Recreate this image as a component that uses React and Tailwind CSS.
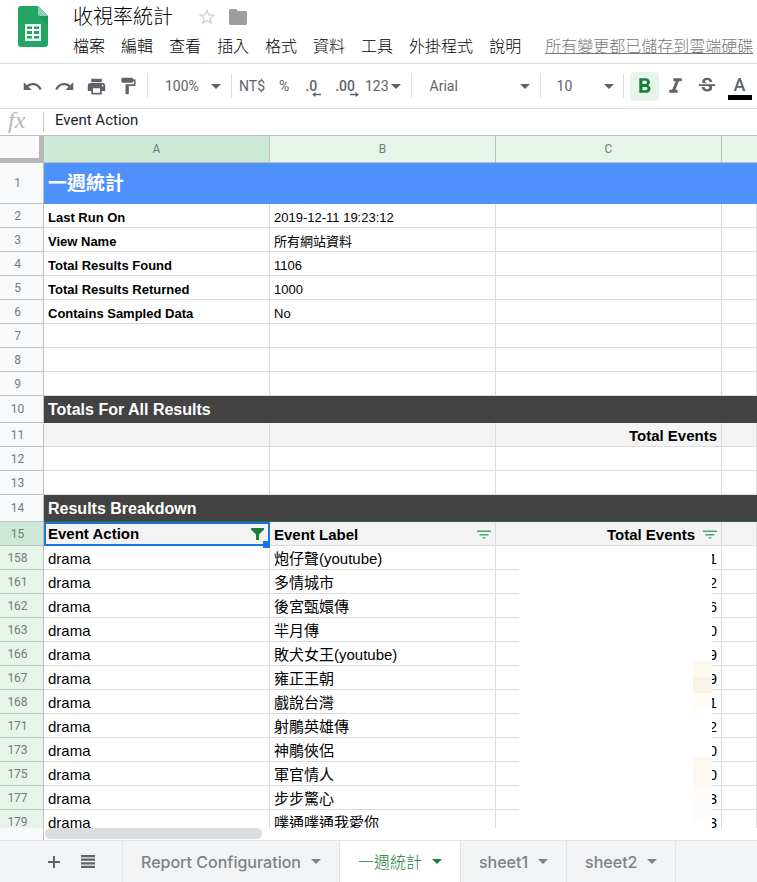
import React from "react";
import {
  MdUndo,
  MdRedo,
  MdPrint,
  MdFormatPaint,
  MdFormatBold,
  MdFormatItalic,
  MdStrikethroughS,
  MdStarBorder,
} from "react-icons/md";

const menus = ["檔案", "編輯", "查看", "插入", "格式", "資料", "工具", "外掛程式", "說明"];

const summary = [
  [2, "Last Run On", "2019-12-11 19:23:12"],
  [3, "View Name", "所有網站資料"],
  [4, "Total Results Found", "1106"],
  [5, "Total Results Returned", "1000"],
  [6, "Contains Sampled Data", "No"],
  [7, "", ""],
  [8, "", ""],
  [9, "", ""],
];

const results = [
  [158, "炮仔聲(youtube)", 1],
  [161, "多情城市", 2],
  [162, "後宮甄嬛傳", 6],
  [163, "羋月傳", 0],
  [166, "敗犬女王(youtube)", 9],
  [167, "雍正王朝", 9],
  [168, "戲說台灣", 1],
  [171, "射鵰英雄傳", 2],
  [173, "神鵰俠侶", 0],
  [175, "軍官情人", 0],
  [177, "步步驚心", 3],
  [179, "噗通噗通我愛你", 3],
];

const cell = "border-r border-b border-[#dcdcdc] px-1 overflow-hidden";

function SheetsLogo() {
  return (
    <svg width="30" height="41" viewBox="0 0 30 41" aria-hidden="true" className="shrink-0">
      <path d="M3 0H20L30 10V38a3 3 0 0 1-3 3H3a3 3 0 0 1-3-3V3a3 3 0 0 1 3-3Z" fill="#23a566" />
      <path d="M20 0 30 10V20L20 10Z" fill="#1c8f57" opacity=".5" />
      <path d="M20 0 30 10H22a2 2 0 0 1-2-2Z" fill="#8ed1b1" />
      <path
        d="M7 18H23V35H7ZM9 20.500V23H14V20.500ZM16 20.500V23H21V20.500ZM9 25V28H14V25ZM16 25V28H21V25ZM9 30V32.500H14V30ZM16 30V32.500H21V30Z"
        fill="#f4fbf7"
        fillRule="evenodd"
      />
    </svg>
  );
}

function Caret() {
  return (
    <svg width="10" height="5" viewBox="0 0 10 5" aria-hidden="true" className="shrink-0">
      <path d="M0 0H10L5 5Z" fill="currentColor" />
    </svg>
  );
}

function Divider() {
  return <span className="h-6 w-px shrink-0 bg-[#dadce0]" />;
}

function Decimals({ text, right }) {
  return (
    <span className="flex flex-col items-end">
      <span className="h-4 pr-1 leading-5">{text}</span>
      <svg width="9" height="5" viewBox="0 0 9 5" aria-hidden="true" className={right ? "rotate-180" : ""}>
        <path d="M0 2.500 3.500 0V1.700H9V3.300H3.500V5Z" fill="currentColor" />
      </svg>
    </span>
  );
}

function RowHead({ n, filtered, selected }) {
  const tone = selected ? "bg-[#cee8d6]" : filtered ? "bg-[#e6f4ea]" : "bg-[#f8f9fa]";
  return (
    <th
      scope="row"
      className={`border-r border-b border-[#c0c0c0] pr-2 text-center font-['Roboto',sans-serif] text-xs font-normal text-[#757a7f] ${tone}`}
    >
      {n}
    </th>
  );
}

function FilterLines({ label }) {
  return (
    <button type="button" aria-label={label} className="text-[#4da36c]">
      <svg width="14" height="9" viewBox="0 0 14 9" aria-hidden="true">
        <path d="M0 .5H14V2H0ZM2.500 4H11.500V5.500H2.500ZM5.500 7.200H8.500V8.500H5.500Z" fill="currentColor" />
      </svg>
    </button>
  );
}

function Tab({ label, active }) {
  return (
    <button
      type="button"
      className={`flex items-center gap-[10px] border-r border-[#e2e4e7] px-[18px] ${
        active ? "bg-white font-light text-[#188038]" : "font-medium text-[#7d8287]"
      }`}
    >
      <span>{label}</span>
      <Caret />
    </button>
  );
}

export default function App() {
  return (
    <div className="flex h-screen flex-col overflow-hidden bg-white font-['Roboto','Noto_Sans_CJK_TC',sans-serif] text-[#5f6368]">
      <header className="flex h-16 shrink-0 border-b border-[#dadce0] pt-[6px] pl-[18px]">
        <SheetsLogo />
        <div className="-mt-px flex min-w-0 flex-1 flex-col pl-[25px] whitespace-nowrap">
          <div className="flex h-6 items-center leading-6">
            <h1 className="text-xl font-light text-black">收視率統計</h1>
            <button type="button" aria-label="加星號" className="ml-6 text-[#cfd1d4]">
              <MdStarBorder size={20} />
            </button>
            <button type="button" aria-label="移動" className="ml-3 text-[#9b9da0]">
              <svg width="18" height="16" viewBox="0 0 18 16" aria-hidden="true">
                <path d="M1.500 0H7L9 2H16.500A1.500 1.500 0 0 1 18 3.500V14.500A1.500 1.500 0 0 1 16.500 16H1.500A1.500 1.500 0 0 1 0 14.500V1.500A1.500 1.500 0 0 1 1.500 0Z" fill="currentColor" />
              </svg>
            </button>
          </div>
          <nav className="flex h-8 items-center gap-4 pt-1 text-base font-light text-black">
            {menus.map((m) => (
              <button key={m} type="button">
                {m}
              </button>
            ))}
            <a href="#saved" className="ml-2 text-[#777] underline">
              所有變更都已儲存到雲端硬碟
            </a>
          </nav>
        </div>
      </header>

      <div className="flex h-[45px] shrink-0 items-center border-b border-[#dadce0] pl-[22px] text-sm whitespace-nowrap">
        <div className="flex items-center gap-[11px]">
          <button type="button" aria-label="復原"><MdUndo size={21} /></button>
          <button type="button" aria-label="重做"><MdRedo size={21} /></button>
          <button type="button" aria-label="列印"><MdPrint size={21} /></button>
          <button type="button" aria-label="套用格式"><MdFormatPaint size={20} /></button>
        </div>
        <div className="flex w-[93px] shrink-0 items-center pl-[9px]">
          <Divider />
          <button type="button" className="flex flex-1 items-center justify-between pr-[10px] pl-[17px]">
            100% <Caret />
          </button>
        </div>
        <Divider />
        <button type="button" className="pl-[7px]">NT$</button>
        <button type="button" className="pl-[14px]">%</button>
        <button type="button" aria-label="減少小數位數" className="pl-4 font-medium"><Decimals text=".0" /></button>
        <button type="button" aria-label="增加小數位數" className="pl-[14px] font-medium"><Decimals text=".00" right /></button>
        <button type="button" className="flex items-center gap-[2px] pr-[10px] pl-[6px]">
          123 <Caret />
        </button>
        <Divider />
        <button type="button" className="flex w-32 shrink-0 items-center justify-between pr-[10px] pl-[18px]">
          Arial <Caret />
        </button>
        <Divider />
        <button type="button" className="flex w-[82px] shrink-0 items-center justify-between pr-[9px] pl-4">
          10 <Caret />
        </button>
        <Divider />
        <button type="button" aria-label="粗體" className="ml-[6px] flex size-[29px] shrink-0 items-center justify-center rounded-sm bg-[#e6f4ea] text-[#188038]">
          <MdFormatBold size={25} />
        </button>
        <button type="button" aria-label="斜體" className="ml-1"><MdFormatItalic size={25} /></button>
        <button type="button" aria-label="刪除線" className="ml-2"><MdStrikethroughS size={22} /></button>
        <button type="button" aria-label="文字顏色" className="ml-[10px] flex w-6 shrink-0 flex-col items-center border-b-[5px] border-black pt-[3px] text-lg leading-5 font-medium">
          A
        </button>
      </div>

      <label className="flex h-[26px] shrink-0 items-center">
        <span className="w-[43px] pb-1 pl-2 font-['Liberation_Serif',serif] text-2xl leading-6 text-[#b8b8b8] italic">fx</span>
        <span className="h-5 w-px bg-[#c8c8c8]" />
        <input
          aria-label="公式列"
          defaultValue="Event Action"
          className="min-w-0 flex-1 pb-1 pl-[11px] text-[15px] text-[#202124] outline-none"
        />
      </label>

      <main className="relative min-h-0 flex-1 overflow-hidden border-t border-[#c0c0c0]">
        <table className="w-full table-fixed border-separate border-spacing-0 text-black">
          <colgroup>
            <col className="w-11" />
            <col className="w-[226px]" />
            <col className="w-[226px]" />
            <col className="w-[226px]" />
            <col />
          </colgroup>
          <thead>
            <tr className="h-[27px] text-xs text-[#757a7f]">
              <td className="border-r-[5px] border-b-[5px] border-[#b7b7b7] bg-[#f8f9fa]" />
              <th scope="col" className="border-r border-b border-[#c0c0c0] bg-[#cee8d6] font-normal">A</th>
              <th scope="col" className="border-r border-b border-[#c0c0c0] bg-[#e6f4ea] font-normal">B</th>
              <th scope="col" className="border-r border-b border-[#c0c0c0] bg-[#e6f4ea] font-normal">C</th>
              <th scope="col" className="border-b border-[#c0c0c0] bg-[#e6f4ea]" />
            </tr>
          </thead>
          <tbody className="font-['Liberation_Sans','Noto_Sans_CJK_TC',sans-serif] whitespace-nowrap">
            <tr className="h-[41px]">
              <RowHead n={1} />
              <td colSpan={4} className="border-b border-[#4d90fe] bg-[#4d90fe] px-1 pt-[2px] text-[19px] leading-6 font-bold text-white">
                一週統計
              </td>
            </tr>
            {summary.map(([n, name, value]) => (
              <tr key={n} className="h-6 text-[13px] leading-[18px]">
                <RowHead n={n} />
                <td className={`${cell} pt-1 font-bold`}>{name}</td>
                <td className={`${cell} pt-1`}>{value}</td>
                <td className={cell} />
                <td className={cell} />
              </tr>
            ))}
            <tr className="h-[27px] text-base leading-5">
              <RowHead n={10} />
              <td colSpan={4} className="bg-[#434343] px-1 font-bold text-white">Totals For All Results</td>
            </tr>
            <tr className="h-6 bg-[#f3f3f3] text-[15px] leading-5">
              <RowHead n={11} />
              <td className={cell} />
              <td className={cell} />
              <td className={`${cell} pt-[3px] text-right font-bold`}>Total Events</td>
              <td className={cell} />
            </tr>
            {[12, 13].map((n) => (
              <tr key={n} className="h-6 leading-5">
                <RowHead n={n} />
                <td className={cell} />
                <td className={cell} />
                <td className={cell} />
                <td className={cell} />
              </tr>
            ))}
            <tr className="h-[27px] text-base leading-5">
              <RowHead n={14} />
              <td colSpan={4} className="border-b border-[#1e6b41] bg-[#434343] px-1 pt-px font-bold text-white">Results Breakdown</td>
            </tr>
            <tr className="h-6 bg-[#f3f3f3] text-[15px] leading-5 font-bold">
              <RowHead n={15} selected />
              <td className="relative border-2 border-[#1a73e8] pr-1 pl-[2px]">
                <div className="flex h-5 items-center justify-between">
                  Event Action
                  <button type="button" aria-label="篩選 Event Action" className="text-[#188038]">
                    <svg width="13" height="12" viewBox="0 0 13 12" aria-hidden="true">
                      <path d="M0 0H13V1.500L8 6.500V12H5V6.500L0 1.500Z" fill="currentColor" />
                    </svg>
                  </button>
                </div>
                <span className="absolute -right-[2px] -bottom-[4px] z-10 size-[7px] bg-[#1a73e8]" />
              </td>
              <td className={cell}>
                <div className="flex h-5 items-center justify-between pt-[2px]">
                  Event Label
                  <FilterLines label="篩選 Event Label" />
                </div>
              </td>
              <td className={cell}>
                <div className="flex h-5 items-center justify-end gap-2 pt-[2px]">
                  Total Events
                  <FilterLines label="篩選 Total Events" />
                </div>
              </td>
              <td className={cell} />
            </tr>
            {results.map(([n, label, total]) => (
              <tr key={n} className="h-6 text-[15px] leading-5">
                <RowHead n={n} filtered />
                <td className={`${cell} pt-[3px]`}>drama</td>
                <td className={`${cell} pt-[3px]`}>{label}</td>
                <td className={`${cell} pt-[3px] text-right`}>{total}</td>
                <td className={cell} />
              </tr>
            ))}
          </tbody>
        </table>
        {/* Concealed part of the totals column */}
        <div className="absolute top-[411px] bottom-0 left-[519px] flex w-[193px] flex-col items-end bg-white">
          <div className="mt-[114px] h-4 w-[19px] bg-[#fcf9f1]" />
          <div className="h-4 w-[19px] bg-[#f8f4e6]" />
          <div className="h-4 w-[19px] bg-[#fefcf5]" />
          <div className="mt-12 h-8 w-[19px] bg-[#fdf8f2]" />
          <div className="h-8 w-[19px] bg-[#fefcfa]" />
        </div>
      </main>

      <div className="flex h-3 shrink-0">
        <div className="w-11 border-r border-[#c0c0c0] bg-[#f8f9fa]" />
        <div className="ml-px h-[11px] w-[217px] rounded-full bg-[#dadce0]" />
      </div>

      <footer className="flex h-[42px] shrink-0 border-t border-[#e2e4e7] bg-[#f1f3f4] font-['Inter','Noto_Sans_CJK_TC',sans-serif] text-base whitespace-nowrap">
        <div className="flex w-[123px] shrink-0 items-center gap-[21px] border-r border-[#e2e4e7] pl-12 text-[#5f6368]">
          <button type="button" aria-label="新增工作表">
            <svg width="12" height="12" viewBox="0 0 12 12" aria-hidden="true">
              <path d="M5 0H7V5H12V7H7V12H5V7H0V5H5Z" fill="currentColor" />
            </svg>
          </button>
          <button type="button" aria-label="所有工作表">
            <svg width="14" height="13" viewBox="0 0 14 13" aria-hidden="true">
              <path d="M0 0H14V2.200H0ZM0 3.600H14V5.800H0ZM0 7.200H14V9.400H0ZM0 10.800H14V13H0Z" fill="currentColor" />
            </svg>
          </button>
        </div>
        <Tab label="Report Configuration" />
        <Tab label="一週統計" active />
        <Tab label="sheet1" />
        <Tab label="sheet2" />
      </footer>
    </div>
  );
}
